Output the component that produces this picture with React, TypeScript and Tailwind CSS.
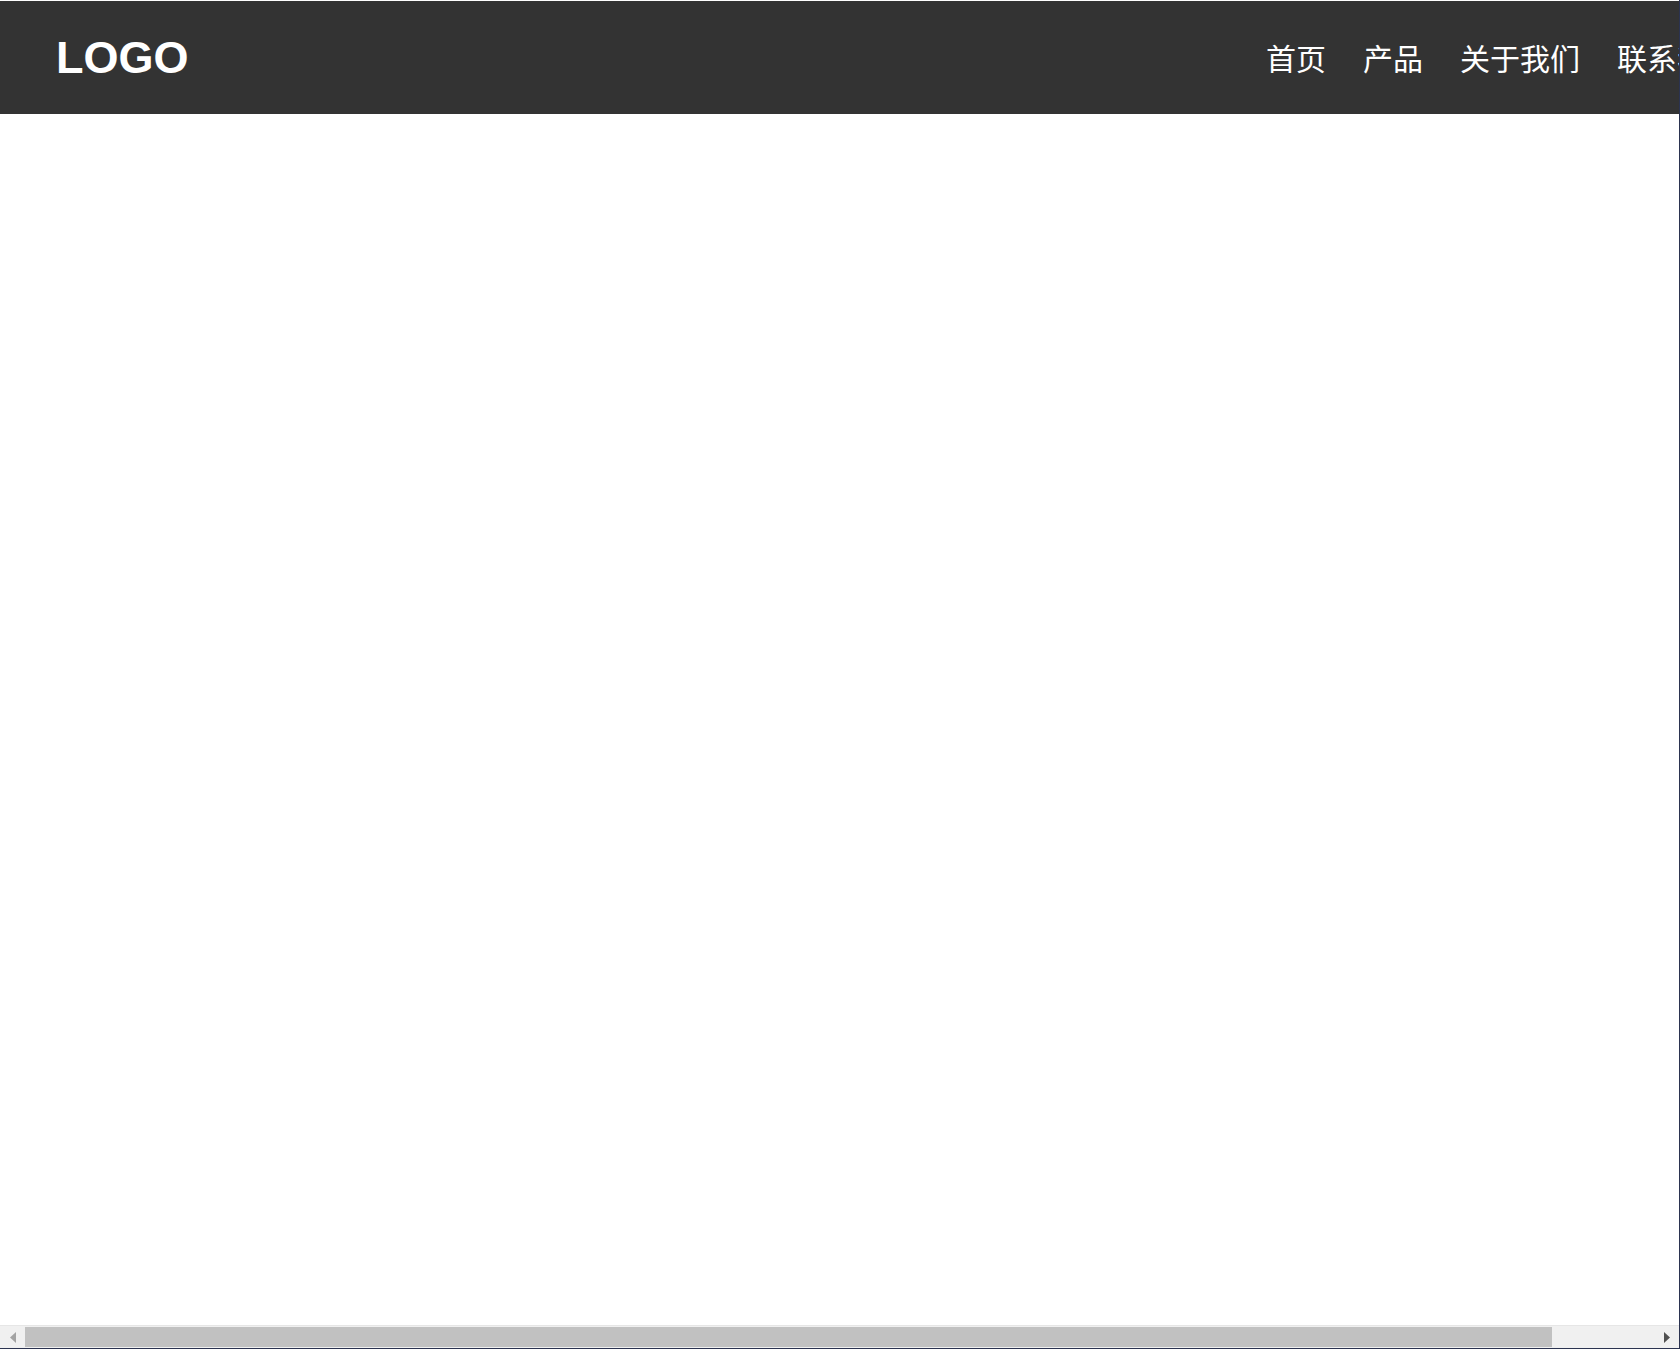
import React from 'react';

const navItems = ['首页', '产品', '关于我们', '联系我们'];

export default function App() {
  return (
    <div className="h-screen w-full flex flex-col overflow-hidden bg-white border-r border-b border-[#2b3350]">
      <div className="flex-1 overflow-hidden">
        <header className="w-[1793px] h-[113px] mt-px bg-[#333333] flex items-center justify-between pl-[56px] pr-[56px] text-white">
          <div className="text-[45px] font-bold leading-none" style={{ fontFamily: '"Liberation Sans", Arial, sans-serif' }}>
            LOGO
          </div>
          <nav className="flex items-center gap-[37px] text-[30px] leading-none pb-px" style={{ fontFamily: '"Noto Sans CJK SC", "Liberation Sans", sans-serif' }}>
            {navItems.map(item => (
              <a key={item} className="whitespace-nowrap">{item}</a>
            ))}
          </nav>
        </header>
      </div>

      {/* horizontal scrollbar */}
      <div className="h-[23px] flex bg-[#f0f0f0] border-t border-[#e6e6e6]">
        <div className="w-[25px] flex items-center justify-center">
          <svg width="6" height="11" viewBox="0 0 6 11"><path d="M6 0 L0 5.5 L6 11 Z" fill="#a3a3a3" /></svg>
        </div>
        <div className="flex-1 flex py-px">
          <div className="w-[1527px] bg-[#c1c1c1]" />
        </div>
        <div className="w-[25px] flex items-center justify-center">
          <svg width="6" height="11" viewBox="0 0 6 11"><path d="M0 0 L6 5.5 L0 11 Z" fill="#505050" /></svg>
        </div>
      </div>
    </div>
  );
}
